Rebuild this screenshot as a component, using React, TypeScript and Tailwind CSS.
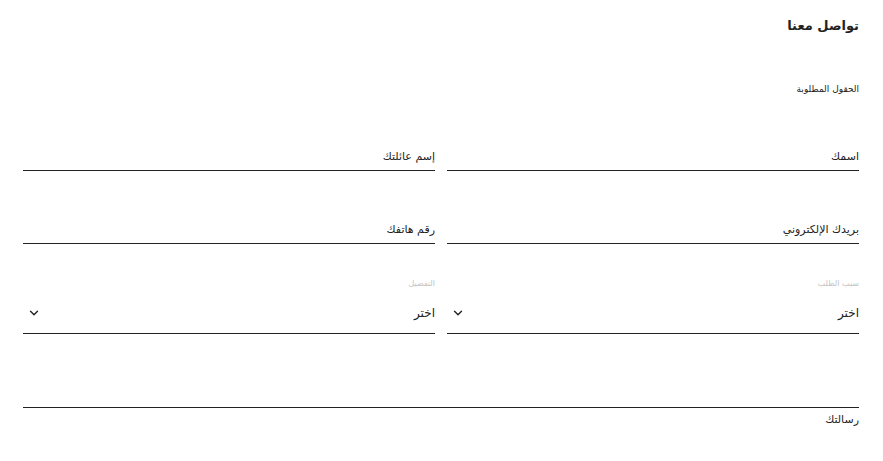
import { ChevronDown } from 'lucide-react';

// ─── Field helpers ────────────────────────────────────────────────────────────
function TextField({ label, height }: { label: string; height: string }) {
  return (
    <div className={`flex flex-col justify-end border-b border-[#222] pb-[7px] ${height}`}>
      <span className="text-[11px] leading-[13px] text-[#222]">{label}</span>
    </div>
  );
}

function SelectField({ label }: { label: string }) {
  return (
    <div className="flex h-[90px] flex-col justify-end border-b border-[#222] pb-[13px]">
      <span className="text-[8px] leading-[10px] text-[#c4c4c4]">{label}</span>
      <div className="mt-[17px] flex items-center justify-between pl-[4px]">
        <span className="text-[12px] leading-[14px] text-[#222]">اختر</span>
        <ChevronDown size={14} strokeWidth={2.4} className="text-[#222]" />
      </div>
    </div>
  );
}

export default function App() {
  return (
    <div
      dir="rtl"
      className="h-[461px] w-[883px] overflow-hidden bg-white pl-[23px] pr-[24px] font-['DejaVu_Sans',sans-serif] text-[#222]"
    >
      <h1 className="pt-[18px] text-[13px] font-bold leading-[16px]">تواصل معنا</h1>
      <p className="mt-[49px] text-[9px] leading-[12px]">الحقول المطلوبة</p>

      <div className="grid grid-cols-2 gap-x-[12px]">
        <TextField label="اسمك" height="h-[76px]" />
        <TextField label="إسم عائلتك" height="h-[76px]" />
        <TextField label="بريدك الإلكتروني" height="h-[73px]" />
        <TextField label="رقم هاتفك" height="h-[73px]" />
        <SelectField label="سبب الطلب" />
        <SelectField label="التفضيل" />
      </div>

      <div className="h-[74px] border-b border-[#222]" />
      <p className="mt-[5px] text-[11px] leading-[14px]">رسالتك</p>
    </div>
  );
}
